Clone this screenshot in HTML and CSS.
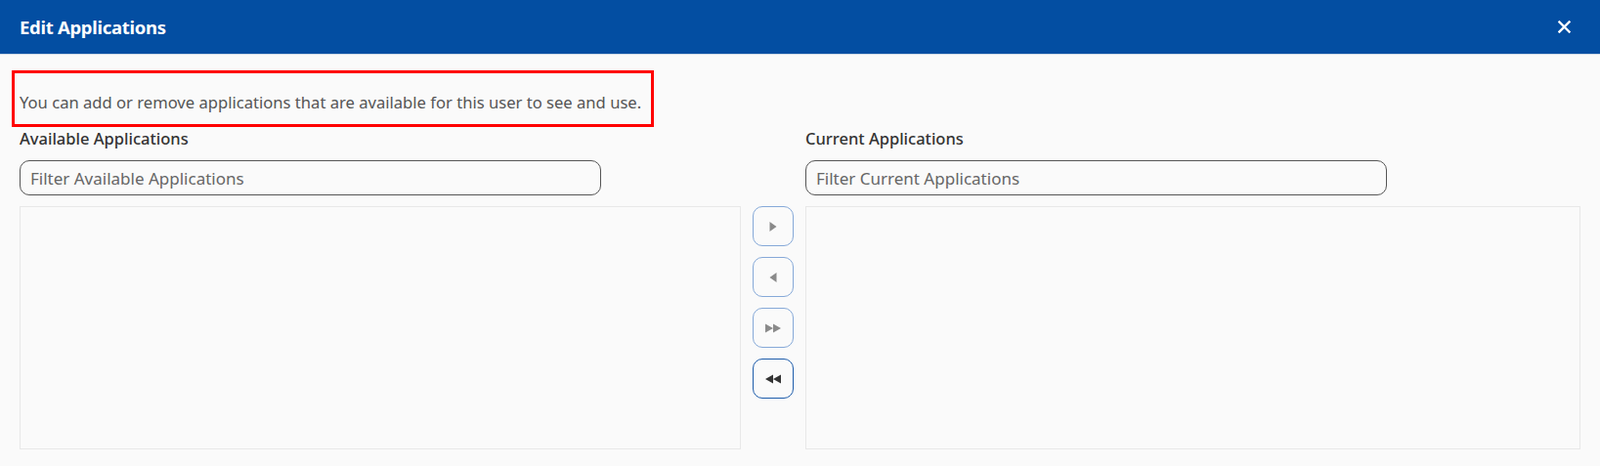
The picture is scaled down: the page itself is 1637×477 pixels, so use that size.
FILE: index.html
```html
<!DOCTYPE html>
<html lang="en">
<head>
    <meta charset="UTF-8">
    <meta name="viewport" content="width=device-width, initial-scale=1.0">
    <title>Edit Applications</title>
    <link rel="stylesheet" href="styles.css">
</head>
<body>
    <div class="modal">
        <div class="modal-header">
            <h2>Edit Applications</h2>
            <button class="close-btn" aria-label="Close">
                <svg width="13" height="13" viewBox="0 0 13 13"><path d="M1.5 1.5 L11.5 11.5 M11.5 1.5 L1.5 11.5" stroke="#fff" stroke-width="2.4" stroke-linecap="square"/></svg>
            </button>
        </div>

        <div class="modal-body">
            <div class="intro">
                <p>You can add or remove applications that are available for this user to see and use.</p>
            </div>

            <div class="picker">
                <label class="col-label left" for="filterAvailable">Available Applications</label>
                <label class="col-label right" for="filterCurrent">Current Applications</label>

                <input class="filter left" type="text" id="filterAvailable" placeholder="Filter Available Applications">
                <input class="filter right" type="text" id="filterCurrent" placeholder="Filter Current Applications">

                <div class="app-list left"></div>

                <div class="move-buttons">
                    <button class="move-btn" title="Add selected">
                        <svg width="10" height="12" viewBox="0 0 10 12"><path d="M1.5 1 L8.5 6 L1.5 11 Z" fill="#8a8a8a"/></svg>
                    </button>
                    <button class="move-btn" title="Remove selected">
                        <svg width="10" height="12" viewBox="0 0 10 12"><path d="M8.5 1 L1.5 6 L8.5 11 Z" fill="#8a8a8a"/></svg>
                    </button>
                    <button class="move-btn" title="Add all">
                        <svg width="16" height="10" viewBox="0 0 16 10"><path d="M0 0.5 L8 5 L0 9.5 Z M8 0.5 L16 5 L8 9.5 Z" fill="#8a8a8a"/></svg>
                    </button>
                    <button class="move-btn active" title="Remove all">
                        <svg width="16" height="10" viewBox="0 0 16 10"><path d="M8 0.5 L0 5 L8 9.5 Z M16 0.5 L8 5 L16 9.5 Z" fill="#333"/></svg>
                    </button>
                </div>

                <div class="app-list right"></div>
            </div>
        </div>
    </div>
</body>
</html>
```

FILE: styles.css
```css
body {
    font-family: 'Noto Sans', 'Open Sans', sans-serif;
    margin: 0;
    background-color: #fafafa;
    color: #333;
}

.modal-header {
    height: 55px;
    background-color: #034ea2;
    border-bottom: 1px solid #cfd8e6;
    display: flex;
    align-items: center;
    justify-content: space-between;
    padding: 0 30px 0 20px;
}

.modal-header h2 {
    margin: 0;
    color: white;
    font-size: 18.5px;
    font-weight: 700;
    letter-spacing: -0.3px;
}

.close-btn {
    background: none;
    border: none;
    padding: 0;
    cursor: pointer;
    display: flex;
}

.modal-body {
    padding: 16px 20px 0 20px;
}

/* highlighted intro text */
.intro {
    width: fit-content;
    margin-left: -8px;
    border: 3px solid #f00;
    padding: 19px 10px 11px 5px;
}

.intro p {
    margin: 0;
    font-size: 16.6px;
    line-height: 22px;
    color: #555;
}

.picker {
    display: grid;
    grid-template-columns: 738px 42px 793px;
    column-gap: 12px;
    margin-top: 1px;
}

.col-label {
    grid-row: 1;
    font-size: 16.5px;
    line-height: 22px;
    font-weight: 500;
    color: #333;
}

.left { grid-column: 1; }
.right { grid-column: 3; }

.filter {
    grid-row: 2;
    width: 595px;
    height: 36px;
    box-sizing: border-box;
    margin-top: 11px;
    padding: 0 10px;
    border: 1px solid #555;
    border-radius: 10px;
    background: #fafafa;
    font-family: inherit;
    font-size: 17px;
    color: #333;
}

.filter::placeholder {
    color: #666;
}

.app-list {
    grid-row: 3;
    height: 249px;
    box-sizing: border-box;
    margin-top: 11px;
    border: 1px solid #e8e8e8;
    background: #fafafa;
}

.move-buttons {
    grid-row: 3;
    grid-column: 2;
    margin-top: 11px;
    display: flex;
    flex-direction: column;
    gap: 11px;
}

.move-btn {
    width: 42px;
    height: 41px;
    box-sizing: border-box;
    border: 1px solid #86a9d8;
    border-radius: 10px;
    background: #fafafa;
    display: flex;
    align-items: center;
    justify-content: center;
    padding: 0;
    cursor: pointer;
}

.move-btn.active {
    border-color: #1d5cab;
}
```
